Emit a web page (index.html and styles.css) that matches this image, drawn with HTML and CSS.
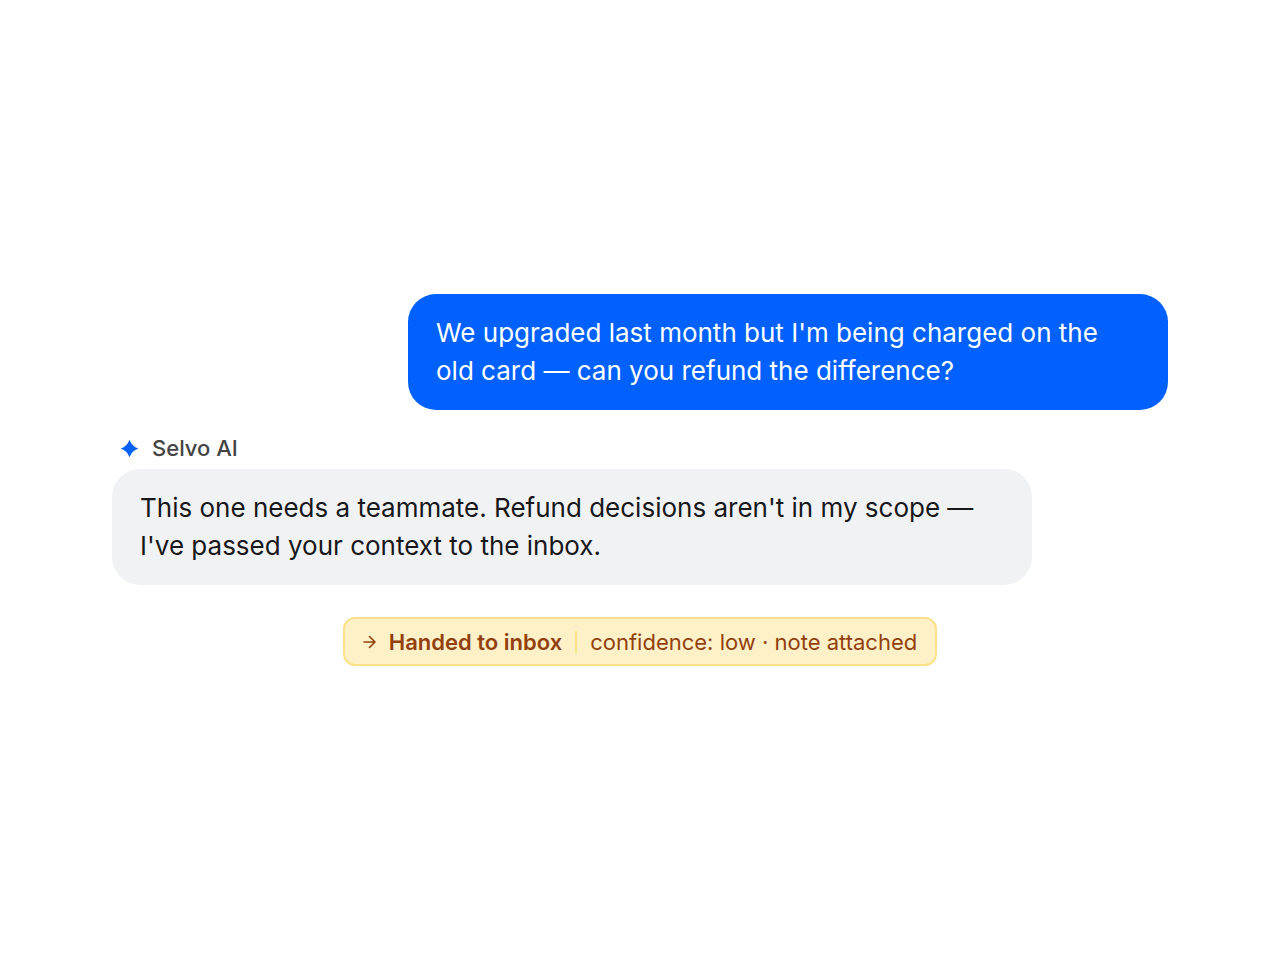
FILE: index.html
```
<!DOCTYPE html>
<html lang="en">
<head>
    <meta charset="UTF-8">
    <meta name="viewport" content="width=device-width, initial-scale=1.0">
    <title>Selvo AI</title>
    <link rel="stylesheet" href="styles.css">
</head>
<body>
    <main class="chat">
        <div class="bubble bubble-user">We upgraded last month but I'm being charged on the old card — can you refund the difference?</div>

        <div class="reply">
            <div class="sender">
                <svg class="spark" viewBox="0 0 20 20" aria-hidden="true">
                    <path d="M9.5 1.7 Q11.8 8.2 18.3 10.5 Q11.8 12.8 9.5 19.3 Q7.2 12.8 0.7 10.5 Q7.2 8.2 9.5 1.7 Z" fill="#0061ff"/>
                </svg>
                <span>Selvo AI</span>
            </div>
            <div class="bubble bubble-ai">This one needs a teammate. Refund decisions aren't in my scope — I've passed your context to the inbox.</div>
        </div>

        <div class="handoff">
            <svg class="arrow" viewBox="0 0 14 14" aria-hidden="true">
                <path d="M1 7 H12 M6.5 1.5 L12 7 L6.5 12.5" fill="none" stroke="#92400e" stroke-width="1.6" stroke-linecap="round" stroke-linejoin="round"/>
            </svg>
            <strong>Handed to inbox</strong>
            <span class="divider"></span>
            <span>confidence: low · note attached</span>
        </div>
    </main>
</body>
</html>
```
FILE: styles.css
```
* {
    margin: 0;
    padding: 0;
    box-sizing: border-box;
}

body {
    min-height: 100vh;
    display: flex;
    align-items: center;
    background: #fff;
    font-family: Inter, sans-serif;
    font-optical-sizing: none;
}

.chat {
    display: flex;
    flex-direction: column;
    width: 100%;
    padding: 0 112px;
}

.bubble {
    padding: 20px 28px;
    border-radius: 28px;
    font-size: 26px;
    line-height: 38px;
}

.bubble-user {
    align-self: flex-end;
    max-width: 760px;
    background: #0061ff;
    color: #fff;
}

.reply {
    max-width: 920px;
    margin-top: 24px;
}

.sender {
    display: flex;
    align-items: center;
    gap: 12px;
    padding-left: 8px;
    margin-bottom: 7px;
    color: #444;
    font-size: 22px;
    font-weight: 500;
    line-height: 28px;
}

.spark {
    width: 20px;
    height: 20px;
}

.bubble-ai {
    background: #f1f2f4;
    color: #18181b;
}

.handoff {
    display: flex;
    align-items: center;
    align-self: center;
    gap: 12px;
    margin-top: 32px;
    padding: 8px 18px 7px;
    border: 2px solid #fbe28a;
    border-radius: 12px;
    background: #fef1c7;
    color: #92400e;
    font-size: 22px;
    line-height: 30px;
}

.handoff strong {
    font-weight: 600;
}

.arrow {
    width: 14px;
    height: 14px;
}

.divider {
    width: 2px;
    height: 22px;
    margin: 0 1px;
    background: #fbe28a;
}
```
